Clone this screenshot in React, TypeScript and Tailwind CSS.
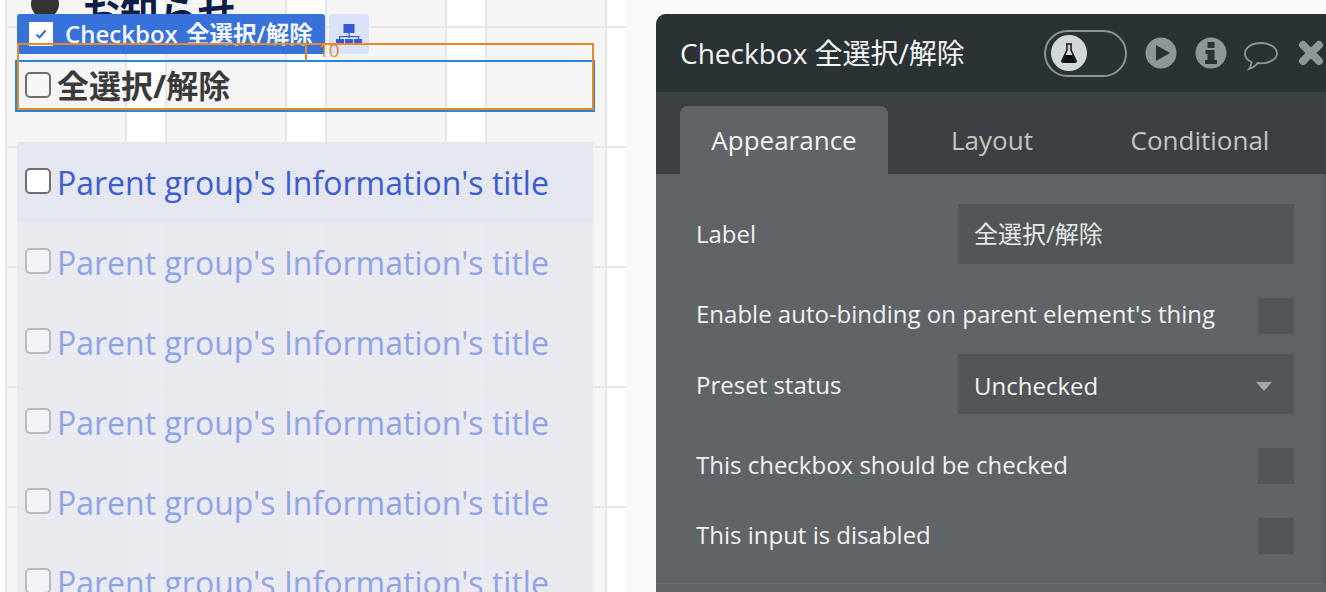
const F = "[font-family:'Open_Sans','Noto_Sans_CJK_JP',sans-serif]";

function Row({ faded }: { faded?: boolean }) {
  return (
    <div className={`h-20 shrink-0 flex items-center pl-[8px] gap-[6px] ${faded ? "" : "bg-[#e4e7f0]"}`}>
      <span className={`w-[26px] h-[26px] -mt-[3px] rounded-[5px] border-2 shrink-0 ${faded ? "border-[#b9babd] bg-[#f2f3f7]" : "border-[#6f6f6f] bg-white"}`} />
      <span className={`text-[32px] leading-[40px] pt-[1px] whitespace-nowrap ${faded ? "text-[#8fa3e8]" : "text-[#3d5bd3]"}`}>Parent group's Information's title</span>
    </div>
  );
}

function Prop({ label, up }: { label: string; up?: boolean }) {
  return (
    <div className="h-9 mt-[34px] flex items-center justify-between pl-10 pr-7">
      <span className={`text-[24px] leading-[32px] text-[#f1f2f2] whitespace-nowrap ${up ? "-mt-[5px]" : "-mt-[3px]"}`}>{label}</span>
      <span className="w-9 h-9 bg-[#515659]" />
    </div>
  );
}

export default function App() {
  return (
    <div className={`${F} relative w-[1326px] h-[592px] overflow-hidden bg-[#f9f9fa] flex`}>
      <div className="relative w-[626px] h-full shrink-0 overflow-hidden bg-white">
        {/* canvas grid */}
        <div className="absolute left-[5px] top-0 right-0 bottom-0 bg-[linear-gradient(90deg,#e6e6e7_2px,#f5f5f6_2px,#f5f5f6_120px,#e6e6e7_120px,#e6e6e7_122px,#ffffff_122px)] bg-[size:160px_100%]" />
        <div className="absolute left-[5px] top-[26px] right-0 bottom-0 bg-[linear-gradient(180deg,#e6e6e7_2px,transparent_2px)] bg-[size:100%_120px]" />

        <div className="relative h-full flex flex-col pl-[17px] pr-[33px] overflow-hidden">
          {/* heading */}
          <div className="h-[71px] shrink-0 flex items-start -mt-[10px] pl-[14px] gap-[25px]">
            <span className="w-[28px] h-[28px] rounded-full bg-[#333333] shrink-0" />
            <span className="text-[39px] leading-[46px] font-semibold text-[#0f1d44] -ml-[3px]">お知らせ</span>
          </div>
          {/* selected checkbox */}
          <div className="h-[50px] shrink-0 flex items-center pl-[8px] gap-[6px]">
            <span className="w-[26px] h-[26px] -mt-[2px] rounded-[5px] border-2 border-[#6f6f6f] bg-[#f7f7f8] shrink-0" />
            <span className="text-[32px] leading-[40px] font-bold text-[#3a3a3a]">全選択/解除</span>
          </div>
          {/* repeating group */}
          <div className="mt-[31px] flex flex-col bg-[#e8e8ef]/90 h-[480px] shrink-0">
            <Row />
            <Row faded />
            <Row faded />
            <Row faded />
            <Row faded />
            <Row faded />
          </div>
        </div>

        {/* selection outlines */}
        <div className="absolute left-[15px] top-[60px] w-[580px] h-[52px] border-2 border-[#2b86d6]" />
        <div className="absolute left-[17px] top-[14px] w-[308px] h-[40px] rounded-[3px] bg-[#3672d9] flex items-center pl-[12px] gap-[12px]">
          <span className="w-6 h-6 bg-white flex items-center justify-center">
            <svg viewBox="0 0 16 16" className="w-[16px] h-[16px]"><path d="M3.500 8.500l3 3 6-7" fill="none" stroke="#3672d9" strokeWidth="2" /></svg>
          </span>
          <span className="text-[24px] leading-[30px] font-semibold text-[#f5f8fe] whitespace-nowrap">Checkbox <span className="text-[23.5px] ml-[2px]">全選択/解除</span></span>
        </div>
        <div className="absolute left-[329px] top-[14px] w-10 h-10 rounded-[3px] bg-[#d9e4f8] flex items-center justify-center">
          <svg viewBox="0 0 26 20" className="w-[26px] h-[20px]" fill="#3a57d8">
            <rect x="7.500" y="0" width="11" height="9" />
            <rect x="12.400" y="9" width="1.200" height="5" />
            <rect x="3" y="12" width="20" height="1.200" />
            <rect x="3" y="12" width="1.200" height="3" />
            <rect x="22" y="12" width="1.200" height="3" />
            <rect x="0" y="15" width="8" height="4" />
            <rect x="9" y="15" width="8" height="4" />
            <rect x="18" y="15" width="8" height="4" />
          </svg>
        </div>
        <div className="absolute left-[17px] top-[43px] w-[577px] h-[67px] border-2 border-[#e48a26]" />
        <div className="absolute left-[305px] top-[44px] w-[2px] h-[17px] bg-[#e48a26]" />
        <span className="absolute left-[318px] top-[40px] text-[19px] leading-[20px] text-[#e48a26]">10</span>
      </div>

      {/* property editor */}
      <div className="ml-[30px] mt-[14px] w-[700px] h-[640px] shrink-0 rounded-tl-[10px] overflow-hidden bg-[#5f6468] flex flex-col">
        <div className="h-[78px] shrink-0 bg-[#2b3235] flex items-center pl-[24px]">
          <span className="w-[364px] text-[28px] leading-[34px] text-[#f4f5f5] whitespace-nowrap shrink-0">Checkbox 全選択/解除</span>
          <span className="w-[83px] h-[47px] rounded-full border-2 border-[#8e9496] flex items-center pl-[5px] shrink-0">
            <span className="w-9 h-9 rounded-full bg-[#d3d7da] flex items-center justify-center">
              <svg viewBox="0 0 20 22" className="w-[20px] h-[22px]">
                <path d="M7 2h6M8 2v6L3 18.500c-.5 1 .2 1.800 1.200 1.800h11.600c1 0 1.700-.8 1.200-1.800L12 8V2" fill="none" stroke="#111" strokeWidth="1.500" />
                <path d="M6 13h8l3 7H3z" fill="#111" />
              </svg>
            </span>
          </span>
          <svg viewBox="0 0 32 32" className="w-8 h-8 ml-[18px] shrink-0">
            <circle cx="16" cy="16" r="15.500" fill="#8e9699" />
            <path d="M11 8l14 8-14 8z" fill="#2b3235" />
          </svg>
          <svg viewBox="0 0 32 32" className="w-8 h-8 ml-[18px] shrink-0">
            <circle cx="16" cy="16" r="15.500" fill="#8e9699" />
            <rect x="12.500" y="5" width="7" height="6" fill="#2b3235" />
            <path d="M10.500 13h9v10h2.500v4H10v-4h2.500v-6h-2z" fill="#2b3235" />
          </svg>
          <svg viewBox="0 0 36 32" className="w-[36px] h-8 ml-[16px] mt-[6px] shrink-0">
            <path d="M18 3C9 3 2 7.500 2 13.500c0 4 3 7 6.500 8.500-.2 2.500-1 5-2.500 7 3.500-1 6.500-3 8.500-6 1.100.2 2.300.3 3.500.3 9 0 16-4.500 16-10S27 3 18 3z" fill="none" stroke="#8e9699" strokeWidth="1.800" />
          </svg>
          <svg viewBox="0 0 28 28" className="w-[28px] h-[28px] ml-[18px] shrink-0">
            <path d="M6 6l16 16M22 6L6 22" stroke="#8e9699" strokeWidth="8" strokeLinecap="round" />
          </svg>
        </div>
        <div className="h-[82px] shrink-0 bg-[#3b4043] flex items-end pl-[24px]">
          <span className="w-[208px] h-[68px] rounded-t-[8px] bg-[#5f6468] flex items-center justify-center text-[26px] text-[#f1f2f2]">Appearance</span>
          <span className="w-[208px] h-[68px] flex items-center justify-center text-[26px] text-[#c3c6c8]">Layout</span>
          <span className="w-[208px] h-[68px] flex items-center justify-center text-[26px] text-[#c3c6c8]">Conditional</span>
        </div>
        <div className="w-[670px] h-[410px] shrink-0 border-b border-b-[#666b6f] border-r-4 border-r-[#585d61] flex flex-col pt-[30px]">
          <div className="h-[60px] flex items-center pl-10 pr-7">
            <span className="w-[262px] shrink-0 text-[24px] text-[#f1f2f2]">Label</span>
            <span className="w-[336px] h-[60px] shrink-0 bg-[#515659] flex items-center pl-4 text-[24px] text-[#e6e7e8]">全選択/解除</span>
          </div>
          <Prop label="Enable auto-binding on parent element's thing" up />
          <div className="h-[60px] mt-5 flex items-center pl-10 pr-7">
            <span className="w-[262px] shrink-0 text-[24px] text-[#f1f2f2] pt-[1px]">Preset status</span>
            <span className="w-[336px] h-[60px] shrink-0 bg-[#515659] flex items-center justify-between pl-4 pr-[22px] text-[24px] text-[#f1f2f2]">
              <span className="pt-1">Unchecked</span>
              <span className="w-0 h-0 border-x-[8px] border-x-transparent border-t-[9px] border-t-[#a4a8aa] mt-1" />
            </span>
          </div>
          <Prop label="This checkbox should be checked" />
          <Prop label="This input is disabled" />
        </div>
      </div>
    </div>
  );
}
